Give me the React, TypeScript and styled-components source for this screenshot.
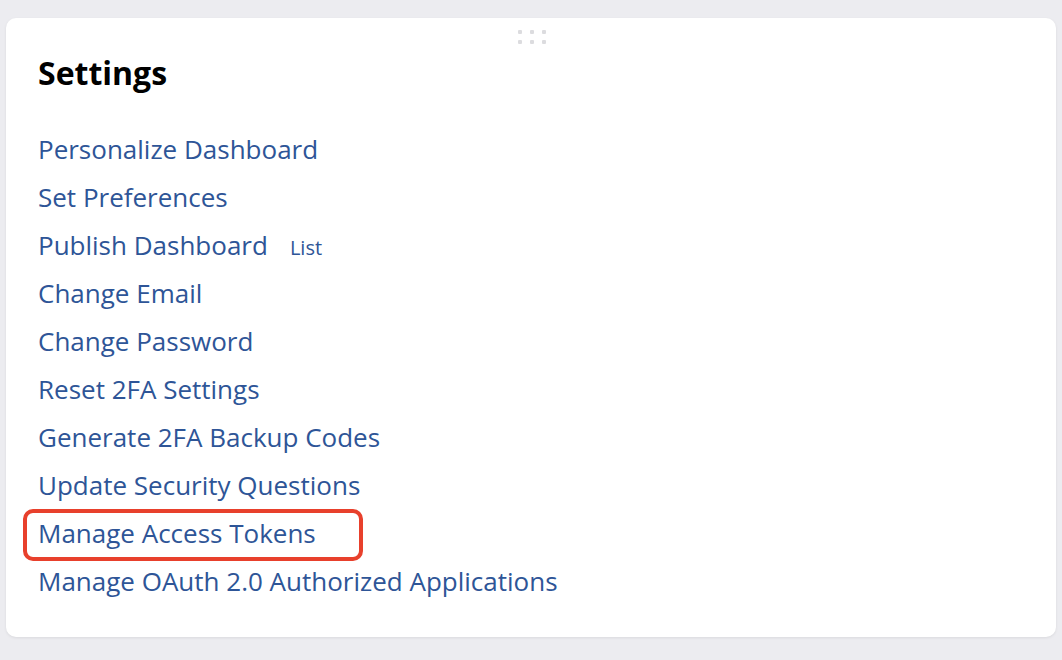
import React from "react";
import styled, { createGlobalStyle } from "styled-components";

const GlobalStyle = createGlobalStyle`
  html, body {
    margin: 0;
    padding: 0;
    background: #ececf0;
    font-family: "Open Sans", "Liberation Sans", sans-serif;
  }
`;

const Page = styled.div`
  padding: 18px 6px 23px 6px;
`;

const Card = styled.section`
  position: relative;
  background: #ffffff;
  border-radius: 10px;
  box-shadow: 0 1px 3px rgba(0, 0, 0, 0.08);
  padding: 38px 32px 32px 32px;
`;

// little grip in the top middle of the card
const DragHandle = styled.div`
  position: absolute;
  top: 12px;
  left: 50%;
  margin-left: -13px;
  display: grid;
  grid-template-columns: repeat(3, 4px);
  grid-auto-rows: 4px;
  column-gap: 8px;
  row-gap: 6px;
`;

const Dot = styled.span`
  background: #dcdcdf;
  border-radius: 1px;
`;

const Title = styled.h2`
  margin: 0;
  font-size: 32px;
  line-height: 34px;
  font-weight: 700;
  color: #000;
`;

const LinkList = styled.ul`
  list-style: none;
  margin: 35px 0 0 0;
  padding: 0;
`;

const Row = styled.li`
  display: flex;
  align-items: baseline;
  gap: 22px;
  height: 48px;
  line-height: 48px;
`;

const Link = styled.a<{ $highlight?: boolean }>`
  position: relative;
  font-size: 26px;
  color: #2e5597;
  text-decoration: none;
  cursor: pointer;

  ${({ $highlight }) =>
    $highlight &&
    `
    &::after {
      content: "";
      position: absolute;
      top: 0px;
      bottom: -4px;
      left: -15px;
      right: -47px;
      border: 4px solid #e8402c;
      border-radius: 10px;
      pointer-events: none;
    }
  `}
`;

const SubLink = styled.a`
  font-size: 20px;
  color: #2e5597;
  text-decoration: none;
  cursor: pointer;
`;

const items: { label: string; extra?: string; highlight?: boolean }[] = [
  { label: "Personalize Dashboard" },
  { label: "Set Preferences" },
  { label: "Publish Dashboard", extra: "List" },
  { label: "Change Email" },
  { label: "Change Password" },
  { label: "Reset 2FA Settings" },
  { label: "Generate 2FA Backup Codes" },
  { label: "Update Security Questions" },
  { label: "Manage Access Tokens", highlight: true },
  { label: "Manage OAuth 2.0 Authorized Applications" },
];

const App: React.FC = () => {
  return (
    <Page>
      <GlobalStyle />
      <Card>
        <DragHandle>
          {Array.from({ length: 6 }).map((_, i) => (
            <Dot key={i} />
          ))}
        </DragHandle>
        <Title>Settings</Title>
        <LinkList>
          {items.map(item => (
            <Row key={item.label}>
              <Link $highlight={item.highlight}>{item.label}</Link>
              {item.extra && <SubLink>{item.extra}</SubLink>}
            </Row>
          ))}
        </LinkList>
      </Card>
    </Page>
  );
};

export default App;
